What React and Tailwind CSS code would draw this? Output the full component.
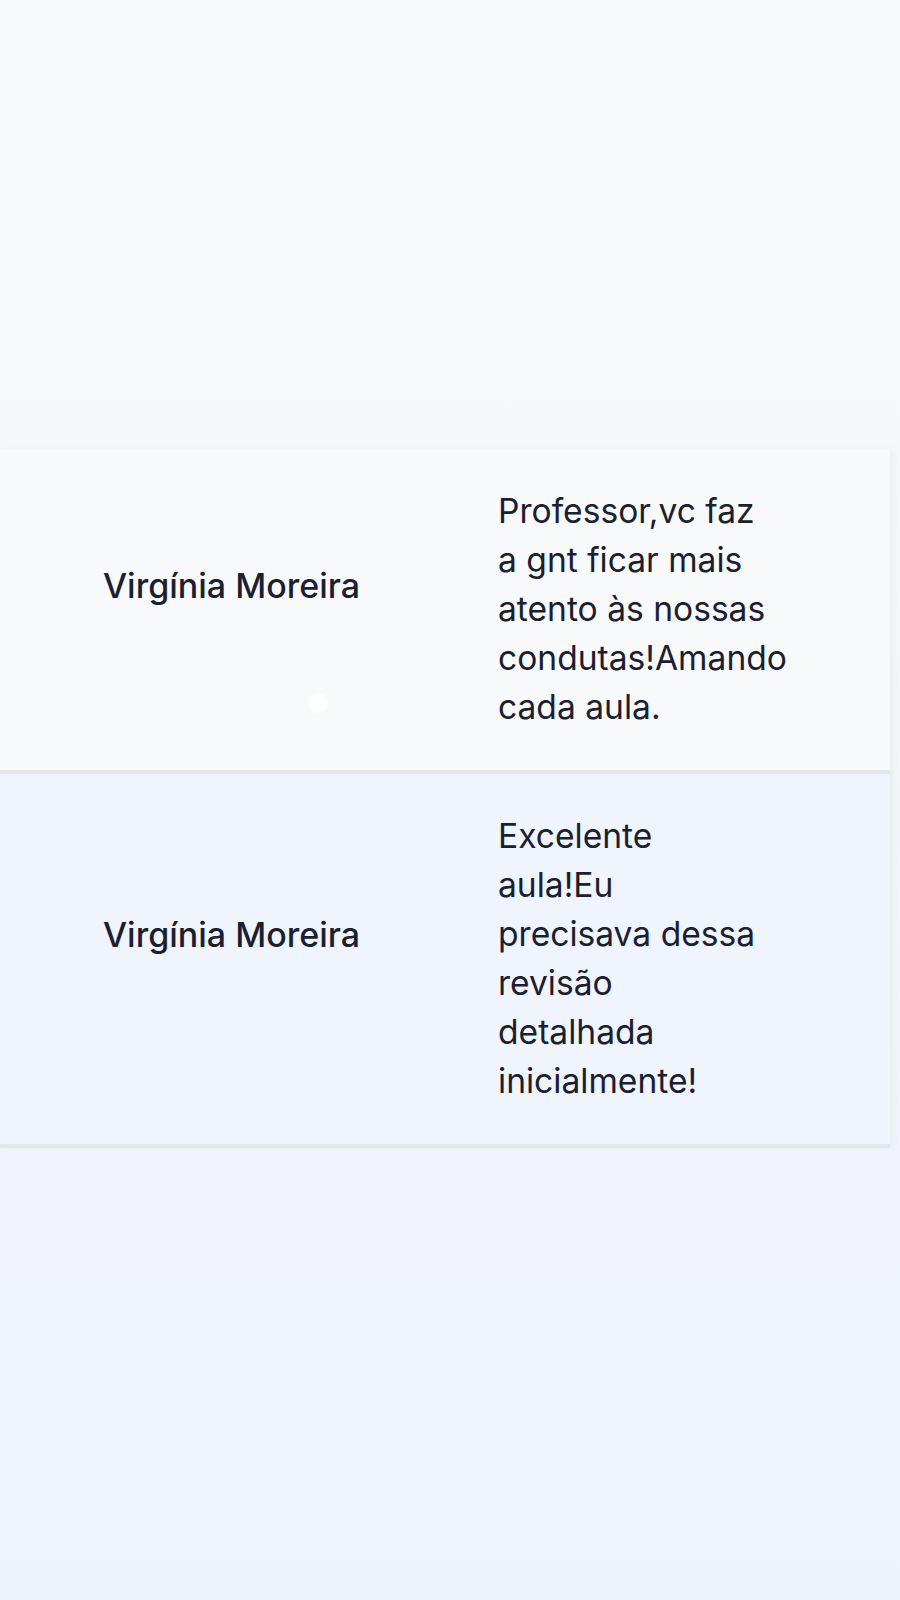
import React from "react";

const comments = [
  {
    name: "Virgínia Moreira",
    lines: ["Professor,vc faz", "a gnt ficar mais", "atento às nossas", "condutas!Amando", "cada aula."],
    bg: "bg-[#f8f9fb]",
    dot: true,
  },
  {
    name: "Virgínia Moreira",
    lines: ["Excelente", "aula!Eu", "precisava dessa", "revisão", "detalhada", "inicialmente!"],
    bg: "bg-[#f0f4fd]",
  },
];

export default function App() {
  return (
    <div
      className="min-h-[1600px] w-[900px] bg-linear-to-b from-[#f8f9fb] via-[#f3f6f9] to-[#eef2fb] text-[#1b2030]"
      style={{ fontFamily: "Inter, 'Noto Sans', sans-serif" }}
    >
      <div className="h-[449px]" />

      {/* Comments table */}
      <div className="w-[890px] shadow-[4px_0_6px_rgba(0,0,0,0.03)]">
        {comments.map((c, i) => (
          <div
            key={i}
            className={`relative flex items-center border-b-4 border-[#e3e6eb] ${c.bg}`}
          >
            <div className="w-[498px] pl-[103px] pb-[49px] text-[34px] font-medium leading-[49px]">
              {c.name}
            </div>
            <div className="w-[320px] pt-[37px] pb-[39px] text-[33.6px] leading-[49px]">
              {c.lines.map((l, j) => (
                <div key={j} className="whitespace-nowrap">
                  {l}
                </div>
              ))}
            </div>
            {c.dot && (
              <span className="absolute left-[308px] top-[244px] h-[20px] w-[20px] rounded-full bg-white blur-[1px]" />
            )}
          </div>
        ))}
      </div>
    </div>
  );
}
